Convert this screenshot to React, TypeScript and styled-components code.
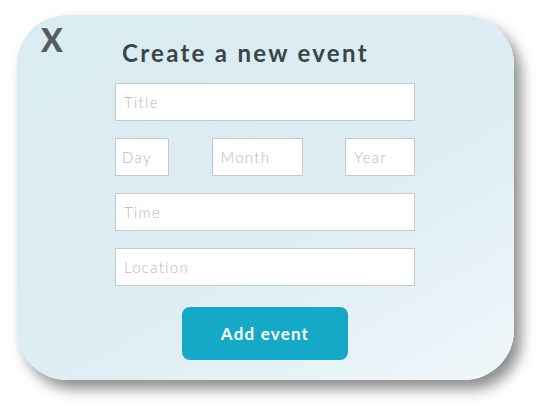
import React from "react";
import styled, { createGlobalStyle } from "styled-components";

const Global = createGlobalStyle`
  html, body { margin: 0; padding: 0; background: #ffffff; }
  body { font-family: "Lato", "Noto Sans", sans-serif; }
  * { box-sizing: border-box; }
`;

const Page = styled.div`
  width: 543px;
  height: 411px;
  padding: 15px 0 0 17px;
`;

const Card = styled.div`
  position: relative;
  width: 497px;
  height: 365px;
  border-radius: 50px;
  background: linear-gradient(150deg, #d9ecf2 0%, #dcedf3 55%, #f0f7fa 100%);
  box-shadow: 7px 9px 14px rgba(0, 0, 0, 0.45);
  display: flex;
  flex-direction: column;
  align-items: flex-start;
  padding: 24px 0 0 98px;
`;

const Close = styled.button`
  position: absolute;
  left: 24px;
  top: 9px;
  border: none;
  background: none;
  padding: 0;
  font-family: "Lato", sans-serif;
  font-weight: 900;
  font-size: 32px;
  color: #565d60;
  line-height: 1;
  cursor: pointer;
`;

const Form = styled.form`
  width: 300px;
  display: flex;
  flex-direction: column;
  gap: 17px;
`;

const Heading = styled.h1`
  margin: 0 0 -1px 7px;
  font-family: "Lato", sans-serif;
  font-weight: 700;
  font-size: 24px;
  line-height: 28px;
  letter-spacing: 2.3px;
  color: #3c4447;
`;

const Field = styled.input<{ $w?: number }>`
  width: ${(p) => (p.$w ? `${p.$w}px` : "100%")};
  height: 38px;
  border: 1px solid #c6c8c9;
  background: #ffffff;
  padding: 0 8px;
  font-family: "Lato", sans-serif;
  font-weight: 300;
  font-size: 15px;
  letter-spacing: 1.3px;
  color: #444;
  outline: none;
  &::placeholder { color: #b8b8b8; }
`;

const DateRow = styled.div`
  display: flex;
  justify-content: space-between;
`;

const Submit = styled.button`
  align-self: center;
  margin-top: 4px;
  width: 166px;
  height: 53px;
  border: none;
  border-radius: 8px;
  background: #15a9c7;
  color: #ffffff;
  font-family: "Lato", sans-serif;
  font-weight: 700;
  font-size: 17px;
  letter-spacing: 1.2px;
  cursor: pointer;
`;

export default function App() {
  return (
    <Page>
      <Global />
      <Card>
        <Close type="button">X</Close>
        <Form onSubmit={(e) => e.preventDefault()}>
          <Heading>Create a new event</Heading>
          <Field placeholder="Title" />
          <DateRow>
            <Field $w={54} placeholder="Day" style={{ paddingLeft: 6 }} />
            <Field $w={91} placeholder="Month" />
            <Field $w={70} placeholder="Year" />
          </DateRow>
          <Field placeholder="Time" />
          <Field placeholder="Location" />
          <Submit type="submit">Add event</Submit>
        </Form>
      </Card>
    </Page>
  );
}
